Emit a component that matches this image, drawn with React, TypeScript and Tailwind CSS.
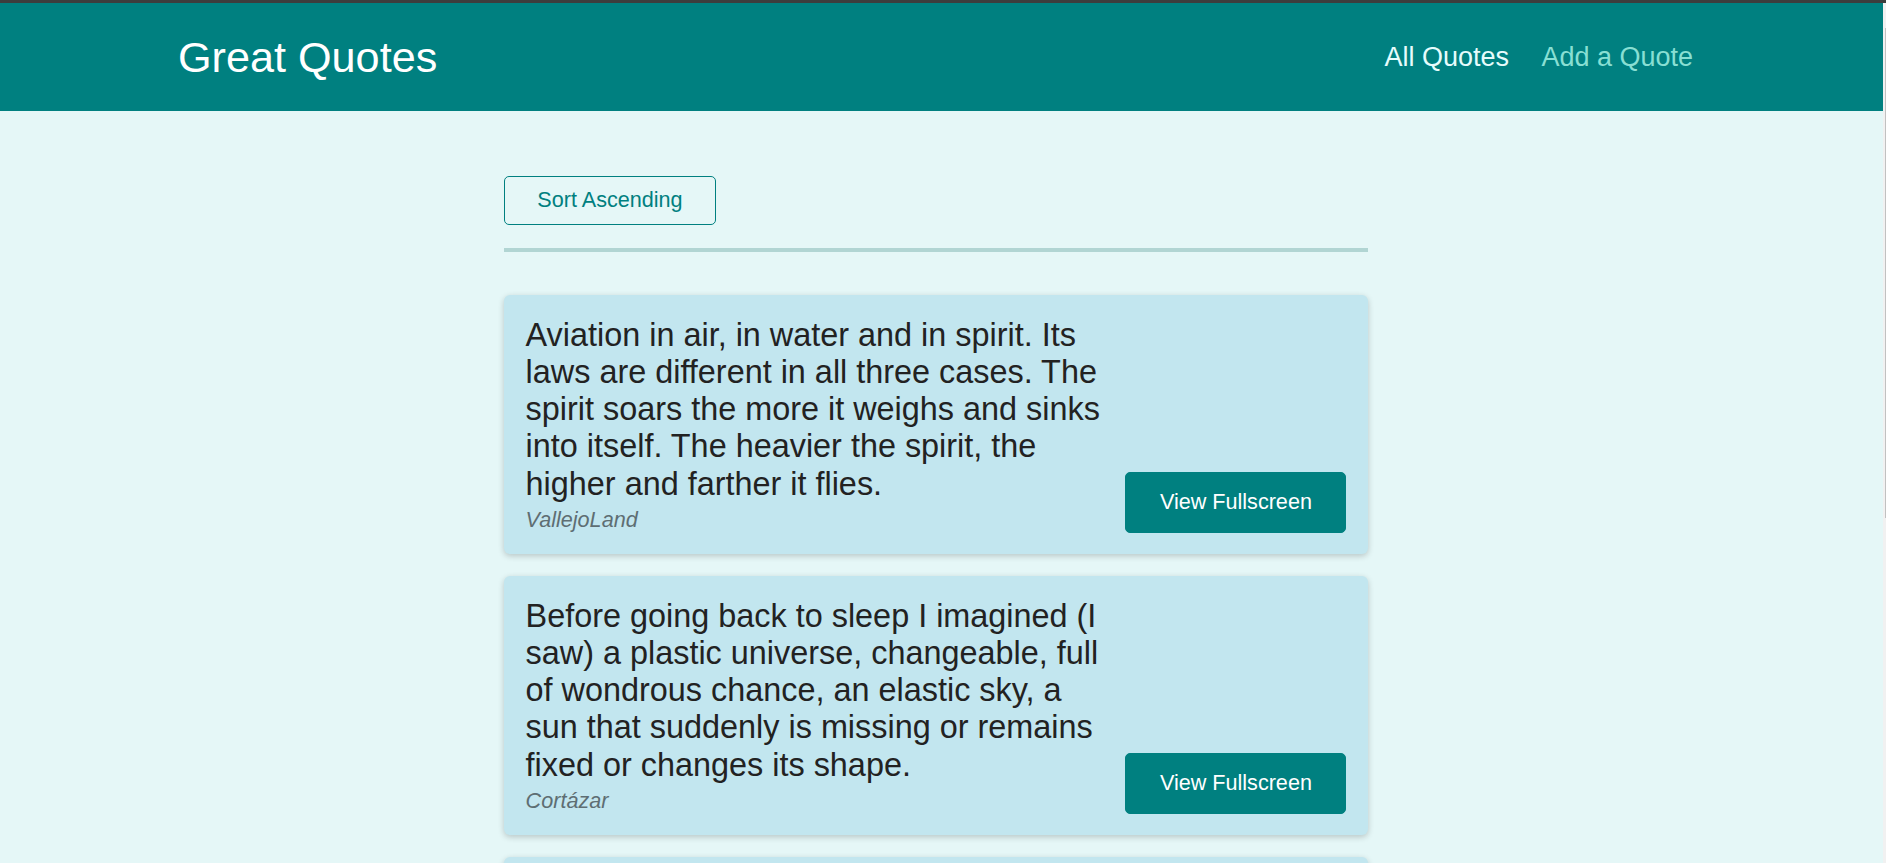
const quotes = [
  {
    id: "q1",
    text: "Aviation in air, in water and in spirit. Its laws are different in all three cases. The spirit soars the more it weighs and sinks into itself. The heavier the spirit, the higher and farther it flies.",
    author: "VallejoLand",
  },
  {
    id: "q2",
    text: "Before going back to sleep I imagined (I saw) a plastic universe, changeable, full of wondrous chance, an elastic sky, a sun that suddenly is missing or remains fixed or changes its shape.",
    author: "Cortázar",
  },
  {
    id: "q3",
    text: "Learning React is fun! Every component you write teaches you something new about the way pages are built.",
    author: "Max",
  },
];

function QuoteItem({ text, author }: { text: string; author: string }) {
  return (
    <li className="flex items-end justify-between rounded-[6px] bg-[#c2e6ef] p-[21.6px] shadow-[0_2px_6px_rgba(0,0,0,0.2)]">
      <figure className="w-[590px]">
        <blockquote>
          <p className="text-[32.4px] leading-[37.26px] text-[#222]">{text}</p>
        </blockquote>
        <figcaption className="mt-[5px] text-[21.6px] italic leading-[24.8px] text-[#5e6e73]">
          {author}
        </figcaption>
      </figure>
      <a className="shrink-0 whitespace-nowrap rounded-[5px] border border-[#008080] bg-[#008080] px-[33.5px] py-[17px] text-[21.6px] leading-[24.8px] text-white">
        View Fullscreen
      </a>
    </li>
  );
}

export default function App() {
  return (
    <div className="flex h-[863px] w-full flex-col overflow-hidden bg-[#e5f7f7] font-['Liberation_Sans',Arial,sans-serif]">
      {/* window edge */}
      <div className="h-[3px] shrink-0 bg-[#3d3d3d]" />

      <div className="flex min-h-0 flex-1">
        <div className="flex-1">
          {/* Header */}
          <header className="flex h-[108px] items-center justify-between bg-[#008080] pl-[178px] pr-[190px]">
            <div className="text-[43.2px] leading-[50px] text-white">Great Quotes</div>
            <nav>
              <ul className="flex gap-[32.4px] text-[27px] leading-[31px]">
                <li className="text-[#e6fcfc]">All Quotes</li>
                <li className="text-[#88dfd3]">Add a Quote</li>
              </ul>
            </nav>
          </header>

          {/* Main */}
          <main className="ml-[504px] w-[864px] pt-[65px]">
            <div>
              <button className="h-[49px] w-[212px] rounded-[5px] border border-[#008080] text-[21.6px] leading-[24.8px] text-[#008080]">
                Sort Ascending
              </button>
            </div>
            <div className="mt-[23px] h-[4px] bg-[#b1d5d3]" />

            <ul className="mt-[43px] flex flex-col gap-[21.6px]">
              {quotes.map((q) => (
                <QuoteItem key={q.id} text={q.text} author={q.author} />
              ))}
            </ul>
          </main>
        </div>

        {/* scrollbar sliver */}
        <aside className="relative w-[3px] shrink-0 bg-[#f1f1f1]">
          <div className="absolute right-0 top-[25px] h-[490px] w-[1px] bg-[#c1c1c1]" />
        </aside>
      </div>
    </div>
  );
}
